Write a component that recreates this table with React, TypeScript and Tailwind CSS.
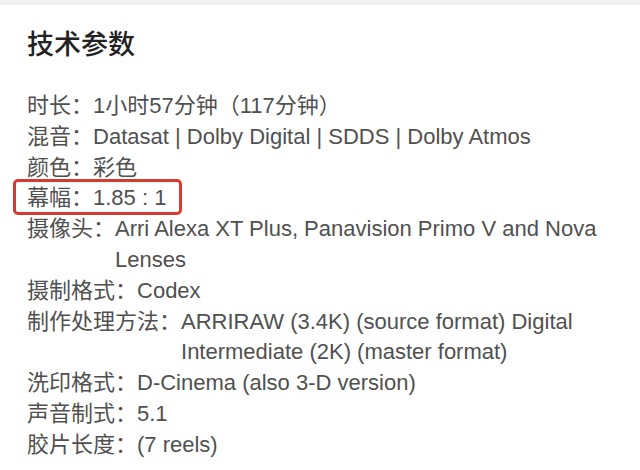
import React from "react";

const rows: { label: string; value: string; boxed?: boolean }[] = [
  { label: "时长：", value: "1小时57分钟（117分钟）" },
  { label: "混音：", value: "Datasat | Dolby Digital | SDDS | Dolby Atmos" },
  { label: "颜色：", value: "彩色" },
  { label: "幕幅：", value: "1.85 : 1", boxed: true },
  { label: "摄像头：", value: "Arri Alexa XT Plus, Panavision Primo V and Nova Lenses" },
  { label: "摄制格式：", value: "Codex" },
  { label: "制作处理方法：", value: "ARRIRAW (3.4K) (source format) Digital Intermediate (2K) (master format)" },
  { label: "洗印格式：", value: "D-Cinema (also 3-D version)" },
  { label: "声音制式：", value: "5.1" },
  { label: "胶片长度：", value: "(7 reels)" },
];

export default function App() {
  return (
    <div
      className="w-[640px] h-[470px] bg-white overflow-hidden"
      style={{ fontFamily: '"Liberation Sans", "Noto Sans CJK SC", sans-serif' }}
    >
      <div className="h-[5px] bg-[#f0f0f0]" />
      <div className="pl-[27px] pr-[34px]">
        <h1 className="mt-[22px] text-[27px] leading-[36px] text-[#222222] font-medium">技术参数</h1>
        <div className="mt-[28px] text-[22px] leading-[30.8px] text-[#505050]">
          {rows.map((r) => (
            <div key={r.label} className="flex">
              <div className={r.boxed ? "relative flex" : "flex"}>
                <span className="shrink-0 whitespace-nowrap">{r.label}</span>
                <span>{r.value}</span>
                {r.boxed && (
                  <span className="absolute left-[-14px] right-[-16px] top-[-4px] bottom-[-1px] border-[3px] border-[#d83a2e] rounded-[5px]" />
                )}
              </div>
            </div>
          ))}
        </div>
      </div>
    </div>
  );
}
